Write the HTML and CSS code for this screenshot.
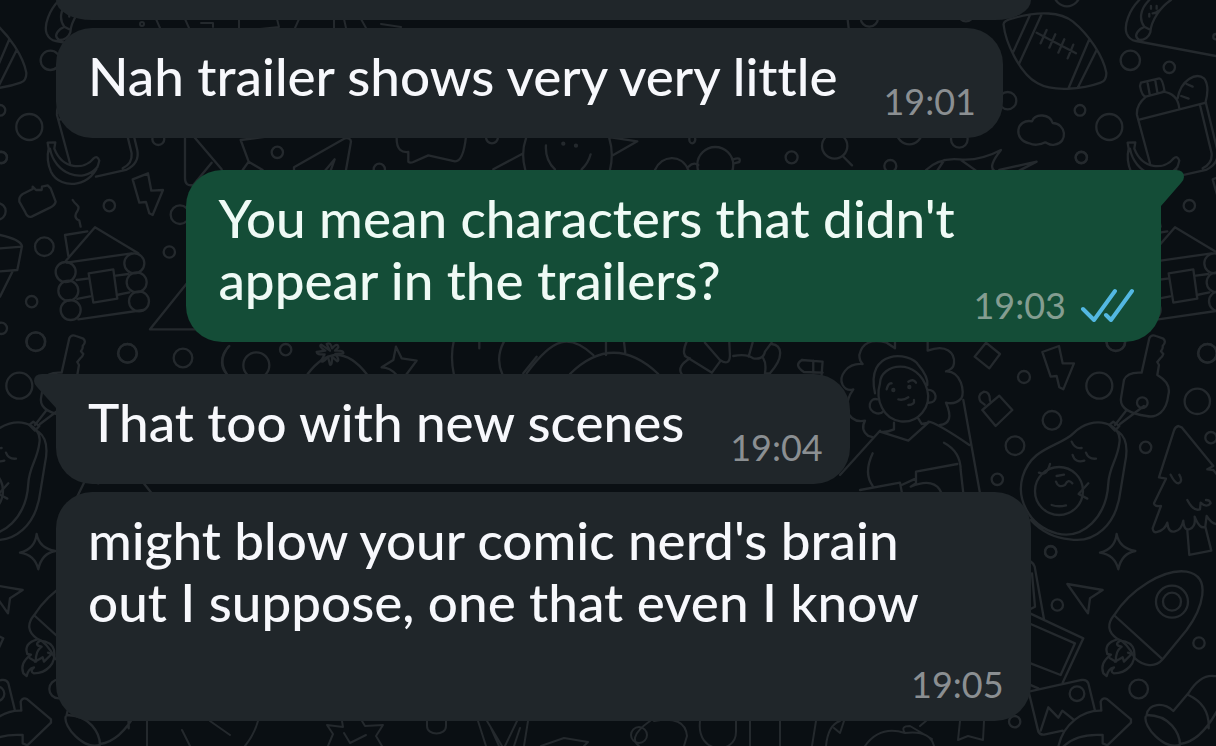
FILE: index.html
```html
<!DOCTYPE html>
<html lang="en">
<head>
<meta charset="utf-8">
<title>Chat</title>
<link rel="stylesheet" href="styles.css">
</head>
<body>
<svg class="wallpaper" viewBox="0 0 1216 746" preserveAspectRatio="xMinYMin slice" aria-hidden="true">
  <defs>
    <g id="tile">
      <!-- football, cloud, bottle, melon -->
      <g transform="translate(816 0) scale(.3333)">
        <path d="M563 75Q560 62 590 55C670 32 735 36 771 65C820 105 862 170 871 218Q872 242 854 248C800 268 710 276 665 250C610 220 568 125 563 75ZM641 47 592 155M676 45 610 190M820 118 758 264M842 150 785 264M662 98 780 160M692 90 674 130M718 103 700 143M745 118 727 158M772 134 755 175"/>
        <path d="M640 430C590 420 600 355 648 364C658 338 702 342 710 369C750 370 758 428 716 434C700 438 694 428 688 427C672 436 652 436 640 430Z"/>
        <path d="M970 0C940 30 923 75 932 100Q940 120 960 123L1200 168M1065 0C1035 20 1005 60 1003 97Q995 120 970 120Q950 108 972 88L985 80M1000 0C970 30 970 60 985 80L1004 90M1005 18v8M1022 18v8M1000 42v8M1028 32q-8 8-18 8"/>
        <path d="M975 248 1030 235Q1040 236 1046 275L990 290Q978 290 972 258ZM995 250l6 32M1018 242l6 34M990 290Q960 315 963 345L1002 490M1040 275Q1085 280 1090 325M967 360 1170 308M1085 295C1095 240 1140 215 1165 236Q1182 260 1168 310M1112 252l18 8M1096 288l22 8M1152 315 1187 460Q1190 490 1160 505M1170 310 1204 450Q1212 490 1170 510L1080 530"/>
        <path d="M935 428 958 427 955 446C980 510 1045 510 1072 476Q1085 465 1090 482C1075 560 975 575 945 515Q930 480 938 446ZM942 446C955 520 1040 555 1085 500"/>
        <circle cx="943" cy="181" r="29"/><circle cx="1060" cy="202" r="17"/><circle cx="792" cy="331" r="16"/><circle cx="880" cy="381" r="39"/><circle cx="796" cy="473" r="17"/><circle cx="575" cy="302" r="26"/><circle cx="753" cy="-20" r="39"/><circle cx="1200" cy="110" r="8"/><circle cx="430" cy="418" r="25"/><circle cx="280" cy="395" r="38"/><circle cx="223" cy="498" r="18"/><circle cx="56" cy="438" r="38"/><path d="M80 468 108 496M330 510Q370 472 430 478T555 450Q515 500 535 512M550 510 662 485 610 512M365 510 385 480M435 480 480 512"/>
        <circle cx="160" cy="54" r="26"/><circle cx="450" cy="38" r="26"/><path d="M94 50 98 85"/>
      </g>
      <!-- briefcase, bolt, cabin -->
      <g transform="translate(0 130) scale(.3333)">
        <path d="M68 192 98 177 98 170 108 180 125 180 126 170 143 166 152 175 167 215Q165 225 150 233L95 260Q82 264 75 245L58 215Q56 200 68 192ZM398 148 444 130 454 182 489 180 458 255 448 250 438 216 418 218ZM218 210C230 230 245 225 228 250Q222 265 238 272L242 290"/>
        <circle cx="328" cy="227" r="17"/><circle cx="540" cy="254" r="28"/><circle cx="133" cy="350" r="28"/><circle cx="508" cy="366" r="17"/><circle cx="95" cy="515" r="17"/><circle cx="108" cy="635" r="28"/><circle cx="383" cy="670" r="28"/><circle cx="549" cy="684" r="28"/><circle cx="475" cy="27" r="18"/><circle cx="-8" cy="244" r="25"/><circle cx="4" cy="82" r="17"/><circle cx="4" cy="595" r="17"/>
        <path d="M205 378 195 315 262 304M198 392 285 292 415 370M200 398 395 370M230 450 268 445M348 437 385 432M232 507 270 499M350 495 388 487M235 568 430 540M266 430 340 418 352 506 280 518Z"/>
        <circle cx="197" cy="426" r="30"/><circle cx="205" cy="482" r="30"/><circle cx="212" cy="540" r="30"/><circle cx="403" cy="400" r="30"/><circle cx="410" cy="457" r="30"/><circle cx="417" cy="514" r="30"/>
        <path d="M0 315Q60 328 66 348L52 420 0 424M0 355 66 350M38 424 0 500"/>
        <path d="M585 430 450 598H680M555 20V145Q555 170 580 165L635 98M582 20 665 118M685 650Q650 700 680 732"/>
      </g>
      <!-- shapes between the first two messages -->
      <g transform="translate(200 120) scale(.3333)">
        <path d="M122 60 200 50M122 60 146 125 188 150M146 125 128 150M282 142 435 55Q452 52 453 65L438 150M282 142V155M375 152 404 118 392 152M590 55C590 90 605 98 625 96V125Q630 130 640 126L685 106 765 124Q790 125 798 50M880 148 966 102M978 55Q962 100 976 150M1038 76Q1035 120 1065 148M1172 103Q1165 130 1145 148M1228 55Q1242 100 1230 150M1232 52 1312 64 1240 105M1365 150C1385 105 1445 100 1465 150M1466 140Q1480 125 1495 135M1600 118Q1625 110 1618 126L1602 130"/>
        <circle cx="232" cy="97" r="17"/><circle cx="538" cy="148" r="17"/><circle cx="876" cy="52" r="18"/><circle cx="1090" cy="71" r="3"/><circle cx="1128" cy="77" r="3"/><circle cx="1546" cy="135" r="54"/><circle cx="1775" cy="112" r="18"/><ellipse cx="1477" cy="58" rx="9" ry="12"/>
      </g>
      <path d="M156 19 160 28M185 19 189 28M201 23h12v4M239 19v9M277 19 279 27 260 29M299 19 295 28M334 19v9M344 19 346 28M361 19 366 28M381 24 401 27"/><circle cx="142" cy="24" r="2"/>
      <!-- shapes between the second and third messages -->
      <g transform="translate(200 330) scale(.3333)">
        <path d="M88 48Q50 85 80 132M323 132Q410 18 500 132M588 50 605 85 650 92 618 135M588 50 580 90 545 112Q570 112 590 135M762 30Q750 80 762 135M838 35V55M912 35Q885 85 908 135M970 130 1010 80M980 130C1060 20 1110 10 1180 75M1110 132Q1240 5 1375 132M1218 35V75M1272 35 1276 68M1460 35Q1440 80 1470 85 1430 110 1445 132M1455 78 1536 128 1560 95M1515 38 1560 90Q1590 110 1590 75L1588 38M1600 78Q1640 70 1660 85Q1690 90 1695 65L1715 38M1658 38 1646 80M1690 85Q1700 100 1695 130H1710C1755 80 1745 45 1715 42M1806 90 1868 95 1865 135M1840 92V128M1868 128 1812 126Q1780 105 1806 90"/>
        <path d="M390 62 380 42Q392 35 396 55Q414 36 415 52L405 62Q432 60 430 70L406 72Q420 90 412 94L396 80Q397 106 390 104L384 80Q366 102 364 92L374 73Q350 75 350 66L376 62Q354 48 364 44Z"/>
        <circle cx="169" cy="106" r="39"/><circle cx="257" cy="59" r="17"/>
      </g>
      <!-- woman with curly hair, key, avocado, tree -->
      <g transform="translate(840 330) scale(.3333)">
        <path d="M165 55 140 38Q70 20 58 75Q58 92 68 102C20 98 -5 140 8 165Q20 185 40 178Q20 205 20 240Q35 280 75 272Q60 300 85 318L100 322M263 62C320 40 345 70 342 100Q340 118 318 124C365 122 375 190 364 205Q345 225 318 218Q345 280 300 285M165 55V35M263 62V35M105 190C75 55 210 65 235 105Q265 140 262 165M120 160C120 100 235 80 262 180C275 230 235 280 182 274C130 268 105 210 120 160ZM262 180C290 175 300 222 262 218M112 208C90 200 75 240 110 250Q125 252 128 245M140 178Q145 158 155 160M205 155Q220 145 228 158M175 208Q190 212 205 202M222 210Q225 225 205 225M162 278V298Q140 308 120 305L205 332 265 278 245 282 233 262M120 302 0 435M265 275Q290 278 388 345M98 370Q70 430 98 468M312 338Q362 365 362 420L370 490M370 210 420 490M60 480 180 458 186 490M185 465 228 445V425L352 402M228 445V460L212 470 Q285 440 305 490"/>
        <circle cx="160" cy="180" r="3"/><circle cx="208" cy="171" r="3"/>
        <path d="M438 38 480 72 448 115 404 80ZM427 240 478 197 517 240 467 288ZM450 212Q450 185 432 185Q410 195 422 215L434 224M607 66 657 48 668 100 702 100 670 178 658 172 650 138 632 140ZM905 128 928 25Q934 12 948 18L970 26Q980 36 968 48Q970 55 963 64L970 72Q968 80 960 86L952 96 957 105 952 135Q995 160 985 195C980 245 950 265 920 258C860 250 840 230 843 205L852 150Q862 125 905 128ZM860 240 825 285M912 228 840 282M820 275 838 288 825 302 808 285Z"/>
        <circle cx="907" cy="218" r="16"/><circle cx="552" cy="141" r="18"/><circle cx="778" cy="167" r="39"/><circle cx="636" cy="271" r="28"/><circle cx="525" cy="347" r="28"/><circle cx="472" cy="448" r="17"/><circle cx="917" cy="352" r="17"/><circle cx="1102" cy="70" r="28"/><circle cx="1072" cy="214" r="38"/><circle cx="1113" cy="323" r="17"/><circle cx="827" cy="35" r="28"/><circle cx="632" cy="665" r="17"/>
        <path d="M700 310C760 250 850 280 838 340C832 390 808 410 805 460C800 560 730 630 650 610C560 585 530 500 548 440C575 350 660 350 700 310ZM835 305Q870 330 855 400L842 480C830 590 760 640 690 628Q620 622 572 570M695 335Q705 358 725 354M698 375Q705 400 733 392M738 368Q745 388 768 386M650 438 672 434M648 455Q655 475 675 465 685 445 697 460M635 525Q655 532 678 526M597 428Q620 440 630 402M745 460 716 492 742 506"/>
        <circle cx="657" cy="483" r="72"/>
        <path d="M1015 288Q1006 290 1002 302L957 442 978 446 942 520Q942 530 963 528L938 595Q940 610 952 606Q975 600 982 578Q985 610 1005 604Q1025 600 1030 572Q1032 605 1050 597Q1068 590 1064 560Q1080 600 1096 590L1100 558Q1120 590 1140 580L1178 560 1150 500 1175 490 1120 420 1102 418 1120 408 1025 292ZM992 434Q1005 460 1015 460Q1030 455 1018 434M1042 510Q1060 545 1080 538L1082 518Q1100 535 1112 520Q1110 510 1098 510M1042 600 1048 675 1114 662 1096 590M830 612Q838 655 886 663Q845 670 835 718Q825 675 780 668Q825 658 830 612Z"/>
      </g>
      <!-- rocket, picture, arrow, boot -->
      <g transform="translate(1000 520) scale(.3333)">
        <path d="M202 192 308 210 270 235 264 280ZM342 286C390 210 490 145 560 155C640 170 605 270 560 330L488 418C465 445 430 438 405 415Q380 365 350 355Q310 325 342 286ZM345 288 488 418"/>
        <circle cx="516" cy="245" r="48"/><circle cx="516" cy="245" r="27"/>
        <path d="M352 358Q310 370 322 402L333 404Q298 430 310 460L320 468Q325 445 342 442Q328 455 342 460C380 460 410 430 402 390Q395 365 360 362Q340 375 365 380Q345 395 348 425L330 415M345 425 368 412 372 425 395 402 384 398"/>
        <path d="M60 120Q95 115 104 140L132 298M96 160 105 260 90 268M90 280 250 355 188 488M92 312 225 370 182 465 92 430M80 490 115 505M86 515 245 480Q260 478 265 490L284 568M86 515 115 635Q120 645 132 644L188 632M122 632 145 562 175 593 187 572 222 600M175 680C190 610 250 570 304 572L302 545Q308 530 322 538L393 598V608L322 676 308 670V645Q230 640 190 680"/>
        <circle cx="231" cy="521" r="22"/><circle cx="44" cy="605" r="17"/><circle cx="152" cy="96" r="17"/><circle cx="172" cy="255" r="17"/><circle cx="597" cy="369" r="17"/><circle cx="416" cy="507" r="28"/>
        <path d="M440 585C445 550 490 545 520 573L565 520Q600 465 640 468L700 470M440 585C510 585 540 640 540 675C490 690 430 620 437 590M565 525Q630 555 626 625M540 672Q600 665 650 575"/>
      </g>
      <!-- shapes below the last message -->
      <path d="M210 721 230 735M258 721Q254 735 245 746M182 730 190 746M147 721V746M342 721 343 727 327 725 333 734 328 746M362 721 365 726 383 725 376 736 382 746M344 733 350 743 366 735M427 721V726C427 736 446 736 446 726V721M478 721 486 746M487 721 502 746M517 721 505 746M528 721 524 746M520 728 514 746M491 728 499 746M541 746 564 738 588 742 584 746M650 721C630 735 634 742 639 746M654 721Q685 715 687 736L684 746M700 721C696 755 736 755 736 732V721M750 721V746M780 721V746M816 721 812 746M840 721Q828 725 826 746M844 721 840 733 834 728M865 746Q880 725 905 733 930 730 934 746M905 733Q900 726 910 726L932 739M920 726 933 715M960 721 958 740 968 736 983 740 984 721"/><circle cx="639" cy="735" r="8"/>
    </g>
  </defs>
  <use href="#tile"/>
  <use href="#tile" x="-1080"/>
  <use href="#tile" x="1080"/>
</svg>

<main class="chat">
  <article class="bubble bubble-in bubble-wide bubble-cut"></article>
  <article class="bubble bubble-in">
    <p class="text">Nah trailer shows very very little</p>
    <footer class="meta"><time>19:01</time></footer>
  </article>
  <article class="bubble bubble-out bubble-wide new-sender">
    <svg class="tail" viewBox="0 0 30 40" aria-hidden="true"><path d="M0 0H22Q30 0 30 7Q30 10 27 13L7 36H0Z"/></svg>
    <p class="text">You mean characters that didn't<br>appear in the trailers?</p>
    <footer class="meta"><time>19:03</time>
      <svg class="ticks" viewBox="0 0 54 34" role="img" aria-label="Read"><path d="M3 21 14 32 35 3M26 27 31 32 52 3"/></svg>
    </footer>
  </article>
  <article class="bubble bubble-in new-sender">
    <svg class="tail" viewBox="0 0 30 40" aria-hidden="true"><path d="M30 0H8Q0 0 0 7Q0 10 3 13L22 34H30Z"/></svg>
    <p class="text">That too with new scenes</p>
    <footer class="meta"><time>19:04</time></footer>
  </article>
  <article class="bubble bubble-in bubble-wide bubble-stacked">
    <p class="text">might blow your comic nerd's brain<br>out I suppose, one that even I know</p>
    <footer class="meta"><time>19:05</time></footer>
  </article>
</main>
</body>
</html>
```
FILE: styles.css
```css
* {
  box-sizing: border-box;
}

body {
  margin: 0;
  min-height: 100vh;
  overflow: hidden;
  background: #0a0f13;
  font-family: Lato, "Noto Sans", sans-serif;
  font-variant-ligatures: none;
}

.wallpaper {
  position: absolute;
  inset: 0;
  width: 100%;
  height: 100%;
  fill: none;
  stroke: #24292d;
  stroke-width: 2;
  stroke-linecap: round;
  stroke-linejoin: round;
}

.wallpaper g g {
  stroke-width: 7;
}

.chat {
  position: relative;
  display: flex;
  flex-direction: column;
  gap: 8px;
  padding: 0 55px 24px 56px;
}

.bubble {
  position: relative;
  display: flex;
  align-items: flex-end;
  justify-content: space-between;
  gap: 46px;
  max-width: 100%;
  padding: 17px 27px 13px 32px;
  border-radius: 36px;
}

.bubble-in {
  align-self: flex-start;
  background: #20262a;
  color: #f7f8fc;
}

.bubble-out {
  align-self: flex-end;
  gap: 0;
  background: #144d37;
  color: #effaf5;
}

.bubble-wide {
  width: 88.2%;
}

.bubble-cut {
  height: 20px;
  padding: 0;
  border-radius: 0 0 36px 36px / 0 0 20px 20px;
}

.new-sender {
  margin-top: 24px;
}

.bubble-in.new-sender {
  border-top-left-radius: 0;
}

.bubble-out.new-sender {
  border-top-right-radius: 0;
}

.text {
  margin: 0;
  padding-bottom: 18px;
  font-size: 53px;
  font-weight: 500;
  line-height: 62px;
  white-space: nowrap;
}

.meta {
  display: flex;
  align-items: center;
  gap: 14px;
  color: #8b8f92;
  font-size: 36px;
  line-height: 48px;
}

.bubble-out .meta {
  color: #849d91;
}

.bubble-stacked {
  flex-direction: column;
  align-items: stretch;
  gap: 9px;
}

.bubble-stacked .meta {
  align-self: flex-end;
}

.tail {
  position: absolute;
  top: 0;
  width: 30px;
  height: 40px;
}

.bubble-in .tail {
  left: -22px;
  fill: #20262a;
}

.bubble-out .tail {
  right: -23px;
  fill: #144d37;
}

.ticks {
  width: 54px;
  height: 34px;
  fill: none;
  stroke: #53b8e2;
  stroke-width: 4;
  stroke-linecap: round;
  stroke-linejoin: round;
}
```
